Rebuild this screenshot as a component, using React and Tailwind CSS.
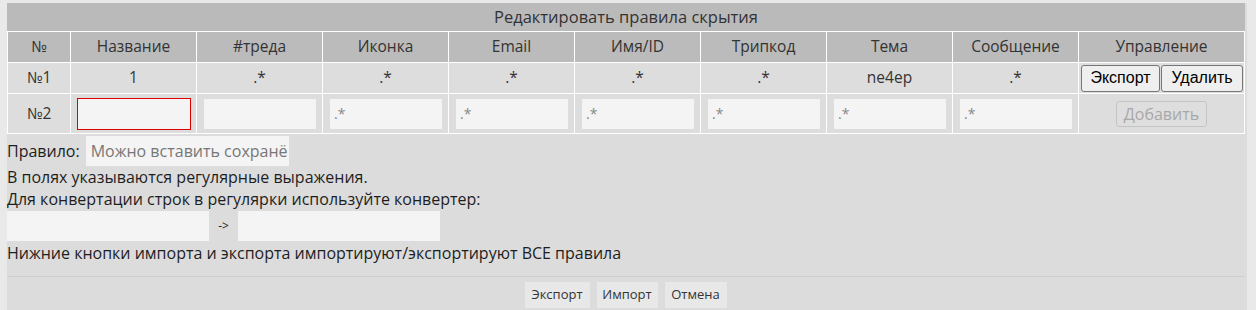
import React from "react";

const cols = ["№", "Название", "#треда", "Иконка", "Email", "Имя/ID", "Трипкод", "Тема", "Сообщение", "Управление"];
const widths = ["w-[63px]", "w-[126px]", "w-[126px]", "w-[126px]", "w-[126px]", "w-[126px]", "w-[126px]", "w-[126px]", "w-[126px]", "w-[166px]"];
const row1 = ["№1", "1", ".*", ".*", ".*", ".*", ".*", "ne4ep", ".*"];

export default function App() {
  return (
    <div className="h-[310px] w-[1256px] bg-[#e9e9e9] pl-[7px] pr-[9px] pt-[3px] text-[#1e1e1e] overflow-hidden" style={{ fontFamily: '"Open Sans", "Noto Sans", sans-serif' }}>
      <div className="h-full bg-[#dcdcdc] pr-[2px] flex flex-col">
        <div className="h-[28px] bg-[#bababa] flex items-center justify-center text-[16.5px] text-[#333]">
          Редактировать правила скрытия
        </div>
        <table className="border-collapse table-fixed w-[1238px] text-[15.5px] text-[#333]">
          <colgroup>
            {widths.map((w, i) => <col key={i} className={w} />)}
          </colgroup>
          <thead>
            <tr className="h-[31px] bg-[#bbbbbb]">
              {cols.map((c) => (
                <th key={c} className="border border-white font-normal text-center p-0">{c}</th>
              ))}
            </tr>
          </thead>
          <tbody>
            <tr className="h-[31px] bg-[#dddddd]">
              {row1.map((c, i) => (
                <td key={i} className="border border-white text-center p-0">{c}</td>
              ))}
              <td className="border border-white p-0 pl-[2px]">
                <div className="flex gap-[1px]" style={{ fontFamily: '"Liberation Sans", Arial, sans-serif' }}>
                  <button className="h-[27px] w-[79px] rounded-[3px] border border-[#767676] bg-[#efefef] text-[16px] text-black">Экспорт</button>
                  <button className="h-[27px] w-[82px] rounded-[3px] border border-[#767676] bg-[#efefef] text-[16px] text-black">Удалить</button>
                </div>
              </td>
            </tr>
            <tr className="h-[40px] bg-[#dddddd]">
              <td className="border border-white text-center p-0">№2</td>
              <td className="border border-white p-0 pl-[6px]">
                <div className="h-[32px] w-[114px] border border-[#e00000] bg-[#f4f4f4]" />
              </td>
              <td className="border border-white p-0 pl-[7px]">
                <div className="h-[30px] w-[112px] bg-[#f4f4f4]" />
              </td>
              {[0, 1, 2, 3, 4, 5].map((i) => (
                <td key={i} className="border border-white p-0 pl-[7px]">
                  <div className="h-[30px] w-[112px] bg-[#f4f4f4] pl-[4px] flex items-center text-[14px] text-[#888]">.*</div>
                </td>
              ))}
              <td className="border border-white p-0 text-center">
                <button disabled className="h-[26px] w-[91px] rounded-[3px] border border-[#c4c4c4] bg-[#dedede] text-[16px] text-[#a8a8a8]">Добавить</button>
              </td>
            </tr>
          </tbody>
        </table>
        <div className="flex items-center h-[31px] mt-[1px] text-[16px]">
          <span>Правило:</span>
          <div className="ml-[6px] h-[30px] w-[203px] bg-[#f4f4f4] flex items-center pl-[5px] text-[#777] overflow-hidden whitespace-nowrap">Можно вставить сохранё</div>
        </div>
        <div className="h-[22px] flex items-center text-[16px]">В полях указываются регулярные выражения.</div>
        <div className="h-[22px] flex items-center text-[16px]">Для конвертации строк в регулярки используйте конвертер:</div>
        <div className="flex items-center h-[31px] text-[12px]">
          <div className="h-[30px] w-[202px] bg-[#f4f4f4]" />
          <span className="w-[29px] text-center">-&gt;</span>
          <div className="h-[30px] w-[202px] bg-[#f4f4f4]" />
        </div>
        <div className="h-[22px] pt-[2px] flex items-center text-[16px]">Нижние кнопки импорта и экспорта импортируют/экспортируют ВСЕ правила</div>
        <div className="mt-[13px] border-t border-[#d0d0d0]" />
        <div className="flex justify-center gap-[7px] mt-[5px] ml-[-1px]">
          <button className="h-[26px] w-[65px] bg-[#e8e8e8] text-[13px] text-[#333]">Экспорт</button>
          <button className="h-[26px] w-[61px] bg-[#e8e8e8] text-[13px] text-[#333]">Импорт</button>
          <button className="h-[26px] w-[62px] bg-[#e8e8e8] text-[13px] text-[#333]">Отмена</button>
        </div>
      </div>
    </div>
  );
}
